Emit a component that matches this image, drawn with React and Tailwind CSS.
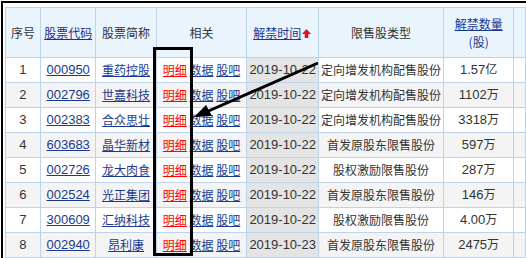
const rows = [
  ["1", "000950", "重药控股", "2019-10-22", "定向增发机构配售股份", "1.57亿"],
  ["2", "002796", "世嘉科技", "2019-10-22", "定向增发机构配售股份", "1102万"],
  ["3", "002383", "合众思壮", "2019-10-22", "定向增发机构配售股份", "3318万"],
  ["4", "603683", "晶华新材", "2019-10-22", "首发原股东限售股份", "597万"],
  ["5", "002726", "龙大肉食", "2019-10-22", "股权激励限售股份", "287万"],
  ["6", "002524", "光正集团", "2019-10-22", "首发原股东限售股份", "146万"],
  ["7", "300609", "汇纳科技", "2019-10-22", "股权激励限售股份", "4.00万"],
  ["8", "002940", "昂利康", "2019-10-23", "首发原股东限售股份", "2475万"],
];

const cjk = "font-['Microsoft_YaHei','Noto_Sans_CJK_SC',sans-serif]";
const num = "font-['Liberation_Sans','Noto_Sans_CJK_SC',sans-serif] text-[13px]";
const link = "text-[#1b3a8f] underline";
const th = "border border-[#bcd3ea] bg-[#eaf4fd] font-normal text-[#333] text-center align-middle";
const td = "border border-[#bcd3ea] text-center align-middle whitespace-nowrap overflow-hidden";

function SortUp() {
  return (
    <svg width="11" height="11" viewBox="0 0 11 11" className="inline-block align-[-1px]">
      <path d="M5.5 1 L10 6 L7.3 6 L7.3 10 L3.7 10 L3.7 6 L1 6 Z" fill="#e8121b" />
    </svg>
  );
}

export default function App() {
  return (
    <div className={`relative h-[258px] w-[526px] overflow-hidden bg-white ${cjk} text-[12px] text-[#333]`}>
      <div className="ml-[1px] mt-[1px] h-full border-l-2 border-t-2 border-black pl-[2px] pt-[4px]">
        <table className="table-fixed border-collapse">
          <colgroup>
            <col className="w-[36px]" />
            <col className="w-[56px]" />
            <col className="w-[61px]" />
            <col className="w-[91px]" />
            <col className="w-[72px]" />
            <col className="w-[125px]" />
            <col className="w-[72px]" />
            <col className="w-[12px]" />
          </colgroup>
          <thead>
            <tr className="h-[50px]">
              <th className={th}>序号</th>
              <th className={th}>
                <span className="text-[#2b2a8c] underline">股票代码</span>
              </th>
              <th className={th}>股票简称</th>
              <th className={th}>相关</th>
              <th className={`${th} whitespace-nowrap`}>
                <span className={link}>解禁时间</span>
                <SortUp />
              </th>
              <th className={th}>限售股类型</th>
              <th className={`${th} leading-[18px]`}>
                <span className={link}>解禁数量</span>
                <br />
                <span className="text-[#1b3a8f]">(股)</span>
              </th>
              <th className={th}></th>
            </tr>
          </thead>
          <tbody>
            {rows.map((r, i) => (
              <tr key={r[0]} className={`h-[25px] ${i % 2 ? "bg-[#f4f4f4]" : "bg-white"}`}>
                <td className={`${td} ${num}`}>{r[0]}</td>
                <td className={`${td} ${num}`}>
                  <span className={link}>{r[1]}</span>
                </td>
                <td className={td}>
                  <span className={link}>{r[2]}</span>
                </td>
                <td className={td}>
                  <span className="text-[#ff0000] underline">明细</span>{" "}
                  <span className={link}>数据</span> <span className={link}>股吧</span>
                </td>
                <td className={`${td} ${num} bg-[#e4e4e4]`}>{r[3]}</td>
                <td className={td}>{r[4]}</td>
                <td className={`${td} ${num}`}>
                  {r[5].slice(0, -1)}
                  <span className="text-[12px]">{r[5].slice(-1)}</span>
                </td>
                <td className={td}></td>
              </tr>
            ))}
          </tbody>
        </table>
      </div>

      {/* annotation: box around 明细 and arrow */}
      <div className="absolute left-[153px] top-[47px] h-[209px] w-[40px] border-[3px] border-black" />
      <svg className="absolute left-0 top-0" width="526" height="258">
        <line x1="318" y1="63" x2="204" y2="113" stroke="#000" strokeWidth="3" />
        <polygon points="194,117 206,105 212,116" fill="#000" />
      </svg>
    </div>
  );
}
